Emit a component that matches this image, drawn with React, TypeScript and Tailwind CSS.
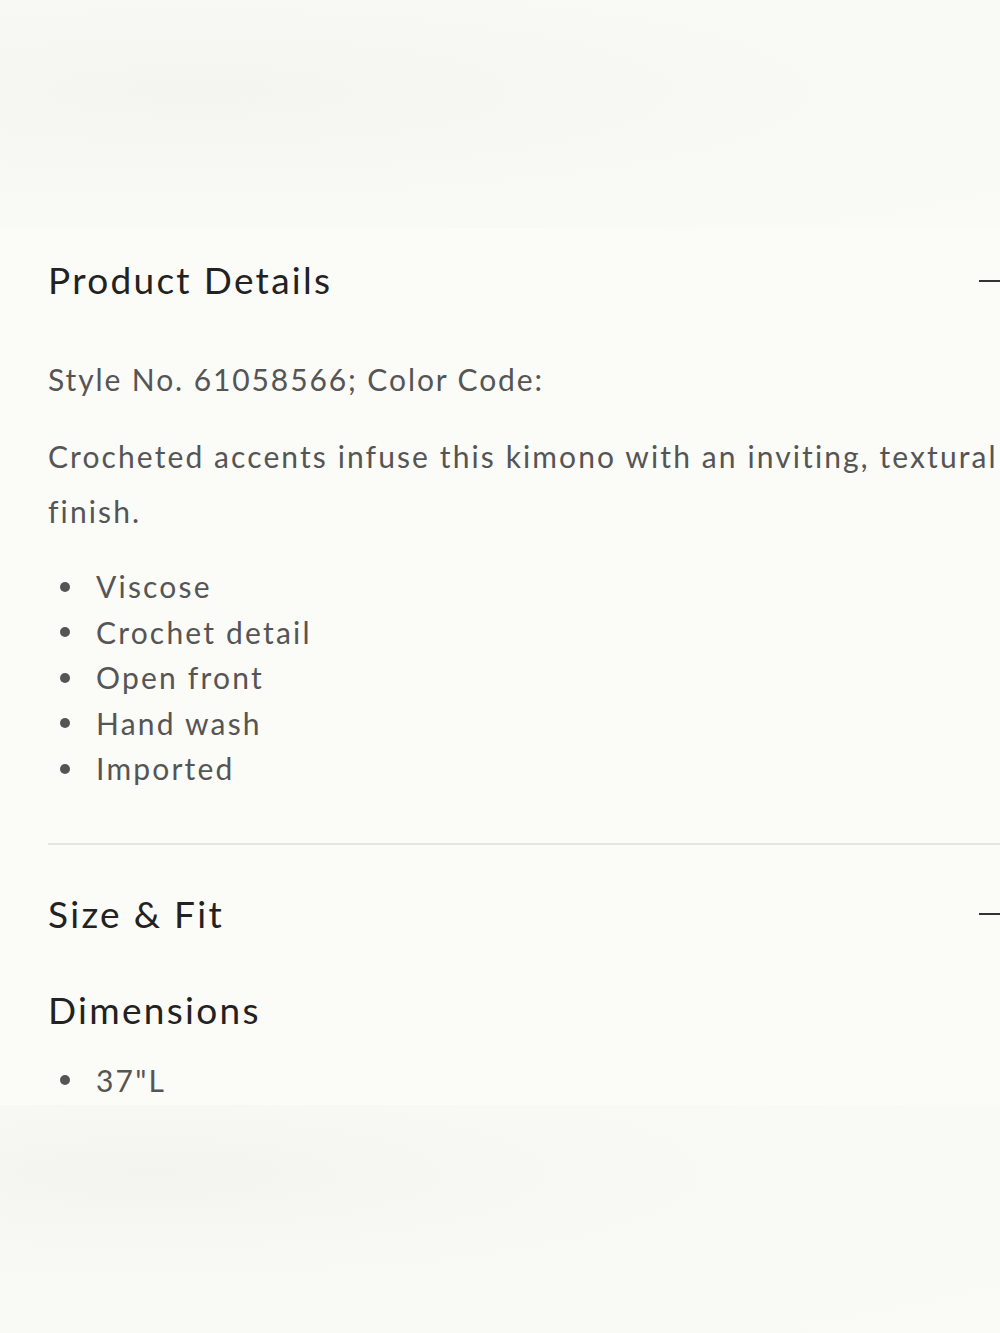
const details = ["Viscose", "Crochet detail", "Open front", "Hand wash", "Imported"];

const Dash = () => <span className="block h-[2px] w-[24px] bg-[#333333] shrink-0 mt-[2px]" />;

const Bullet = ({ children }: { children: React.ReactNode }) => (
  <li className="flex items-center">
    <span className="w-[48px] flex justify-start pl-[12px]">
      <span className="block h-[10px] w-[10px] rounded-full bg-[#555555]" />
    </span>
    {children}
  </li>
);

export default function App() {
  return (
    <div className="w-[1000px] h-[1333px] overflow-hidden bg-[#fbfbf8] flex flex-col" style={{ fontFamily: "Lato, 'Noto Sans', sans-serif" }}>
      <div className="h-[228px] shrink-0 bg-[radial-gradient(ellipse_at_20%_40%,#f4f4f1_0%,#f8f8f5_45%,#fafaf7_100%)]" />

      <section className="flex-1 pl-[48px] w-[1010px]">
        <div className="pt-[33px] flex items-center justify-between w-[955px]">
          <h2 className="text-[37px] leading-[37px] text-[#222222] tracking-[2.3px]">Product Details</h2>
          <Dash />
        </div>

        <p className="mt-[54px] text-[30px] leading-[55px] text-[#555555] tracking-[1.9px]">
          Style No. 61058566; Color Code:
        </p>
        <p className="mt-[22px] text-[30px] leading-[55px] text-[#555555] tracking-[2.1px] w-[960px]">
          Crocheted accents infuse this kimono with an inviting, textural finish.
        </p>

        <ul className="mt-[25px] text-[30px] leading-[45.5px] text-[#555555] tracking-[2.2px]">
          {details.map((d) => (
            <Bullet key={d}>{d}</Bullet>
          ))}
        </ul>

        <div className="mt-[51px] h-[2px] bg-[#e4e4e1]" />

        <div className="mt-[50px] flex items-center justify-between w-[955px]">
          <h2 className="text-[37px] leading-[37px] text-[#222222] tracking-[2.3px]">Size &amp; Fit</h2>
          <Dash />
        </div>

        <h3 className="mt-[59px] text-[37px] leading-[37px] text-[#222222] tracking-[2.3px]">Dimensions</h3>
        <ul className="mt-[30px] text-[30px] leading-[45.5px] text-[#555555] tracking-[2.2px]">
          <Bullet>37"L</Bullet>
        </ul>
      </section>

      <div className="h-[228px] shrink-0 bg-[radial-gradient(ellipse_at_15%_30%,#f3f3f0_0%,#f8f8f5_35%,#fafaf7_100%)]" />
    </div>
  );
}
